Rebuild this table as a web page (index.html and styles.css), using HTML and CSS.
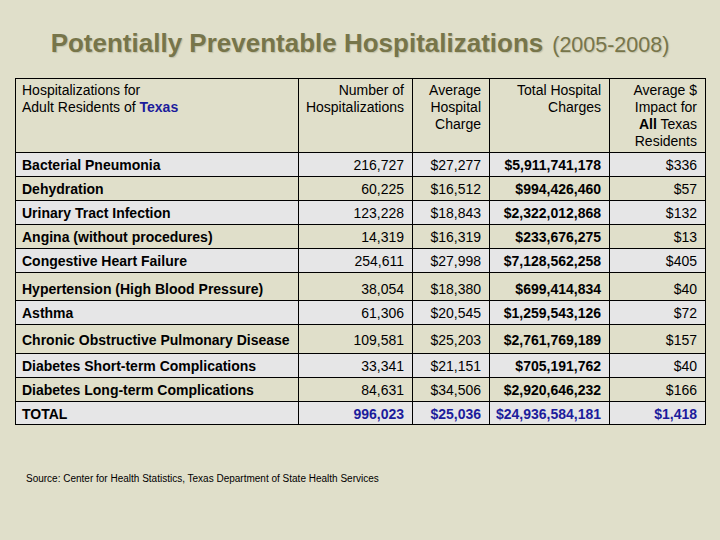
FILE: index.html
```html
<!DOCTYPE html>
<html>
<head>
<meta charset="utf-8">
<link rel="stylesheet" href="styles.css">
</head>
<body>
<div class="slide">
  <h1 class="title"><span class="title-main">Potentially Preventable Hospitalizations</span> <span class="title-years">(2005-2008)</span></h1>
  <table class="data">
    <colgroup>
      <col class="c1"><col class="c2"><col class="c3"><col class="c4"><col class="c5">
    </colgroup>
    <thead>
      <tr class="head">
        <th class="label">Hospitalizations for<br>Adult Residents of <span class="blue">Texas</span></th>
        <th>Number of<br>Hospitalizations</th>
        <th>Average<br>Hospital<br>Charge</th>
        <th>Total Hospital<br>Charges</th>
        <th>Average $<br>Impact for<br><b>All</b> Texas<br>Residents</th>
      </tr>
    </thead>
    <tbody>
      <tr class="grey"><td class="label">Bacterial Pneumonia</td><td>216,727</td><td>$27,277</td><td class="bold">$5,911,741,178</td><td>$336</td></tr>
      <tr><td class="label">Dehydration</td><td>60,225</td><td>$16,512</td><td class="bold">$994,426,460</td><td>$57</td></tr>
      <tr class="grey"><td class="label">Urinary Tract Infection</td><td>123,228</td><td>$18,843</td><td class="bold">$2,322,012,868</td><td>$132</td></tr>
      <tr><td class="label">Angina (without procedures)</td><td>14,319</td><td>$16,319</td><td class="bold">$233,676,275</td><td>$13</td></tr>
      <tr class="grey"><td class="label">Congestive Heart Failure</td><td>254,611</td><td>$27,998</td><td class="bold">$7,128,562,258</td><td>$405</td></tr>
      <tr class="tall"><td class="label">Hypertension (High Blood Pressure)</td><td>38,054</td><td>$18,380</td><td class="bold">$699,414,834</td><td>$40</td></tr>
      <tr class="grey"><td class="label">Asthma</td><td>61,306</td><td>$20,545</td><td class="bold">$1,259,543,126</td><td>$72</td></tr>
      <tr class="taller"><td class="label">Chronic Obstructive Pulmonary Disease</td><td>109,581</td><td>$25,203</td><td class="bold">$2,761,769,189</td><td>$157</td></tr>
      <tr class="grey"><td class="label">Diabetes Short-term Complications</td><td>33,341</td><td>$21,151</td><td class="bold">$705,191,762</td><td>$40</td></tr>
      <tr><td class="label">Diabetes Long-term Complications</td><td>84,631</td><td>$34,506</td><td class="bold">$2,920,646,232</td><td>$166</td></tr>
      <tr class="grey total"><td class="label">TOTAL</td><td class="blue">996,023</td><td class="blue">$25,036</td><td class="blue">$24,936,584,181</td><td class="blue">$1,418</td></tr>
    </tbody>
  </table>
  <p class="source">Source: Center for Health Statistics, Texas Department of State Health Services</p>
</div>
</body>
</html>
```

FILE: styles.css
```css
html, body {
  margin: 0;
  padding: 0;
}

body {
  background: #e0dfca;
  font-family: "Liberation Sans", Arial, sans-serif;
  color: #000;
}

.slide {
  width: 720px;
  height: 540px;
  box-sizing: border-box;
  padding-top: 26px;
  background: #e0dfca;
  overflow: hidden;
}

.title {
  margin: 0;
  text-align: center;
  line-height: 30px;
  color: #77754a;
  font-weight: normal;
  text-shadow: 1px 1px 1px rgba(60, 60, 30, 0.18);
}

.title-main {
  font-size: 26px;
  font-weight: bold;
}

.title-years {
  font-size: 21.5px;
}

.data {
  margin: 18px 0 0 15px;
  width: 691px;
  table-layout: fixed;
  border-collapse: collapse;
  border: 1px solid #000;
  font-size: 14px;
}

.c1 { width: 283px; }
.c2 { width: 114px; }
.c3 { width: 77px; }
.c4 { width: 120px; }
.c5 { width: 96px; }

.data th,
.data td {
  border: 1px solid #000;
  padding: 0 8px 0 6px;
  text-align: right;
  white-space: nowrap;
}

.data th {
  font-weight: normal;
  vertical-align: top;
  line-height: 17px;
  padding-top: 3px;
  height: 70px;
}

.data th.label,
.data td.label {
  text-align: left;
}

.data td {
  height: 22px;
  line-height: 16px;
  vertical-align: middle;
  padding-top: 1px;
  padding-bottom: 0;
}

.data td.label {
  font-weight: bold;
}

.data td.bold {
  font-weight: bold;
}

.data tr.grey {
  background: #e6e6e7;
}

.data tr.tall td {
  height: 23px;
  padding-top: 4px;
}

.data tr.taller td {
  height: 26px;
  padding-top: 2px;
}

.data tr.total td {
  height: 21px;
}

.blue {
  color: #1c1c9c;
  font-weight: bold;
}

.source {
  margin: 48px 0 0 26px;
  font-size: 10px;
  line-height: 12px;
}
```
